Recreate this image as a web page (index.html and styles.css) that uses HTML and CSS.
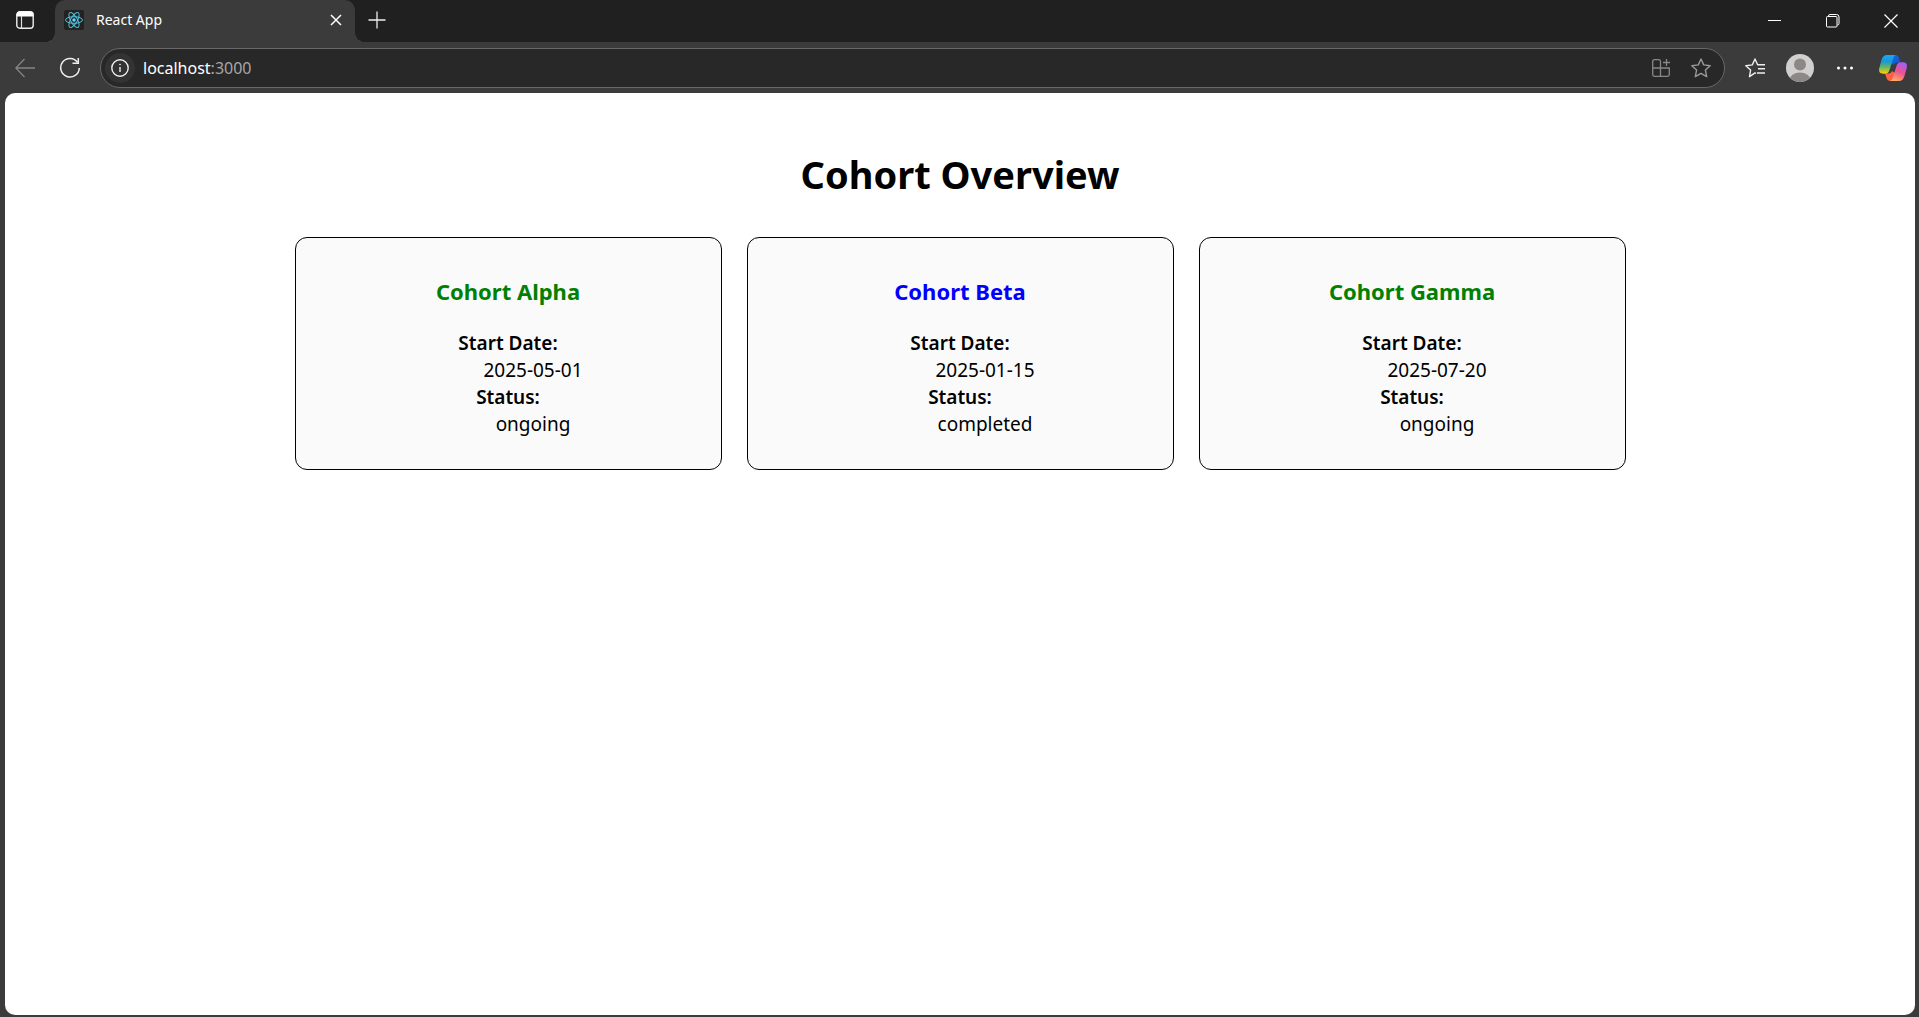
FILE: index.html
```html
<!DOCTYPE html>
<html lang="en">
<head>
<meta charset="utf-8">
<title>React App</title>
<link rel="stylesheet" href="styles.css">
</head>
<body>
<header class="chrome">
  <div class="tabstrip">
    <button class="tab-actions" aria-label="Tab actions">
      <svg width="18" height="18" viewBox="0 0 18 18" fill="none"><rect x=".8" y=".8" width="16.4" height="16.4" rx="3" stroke="#eee" stroke-width="1.4"/><path d="M1 5V3.500Q1 1 3.500 1H14.500Q17 1 17 3.500V5Z" fill="#fff" stroke="#fff"/><path d="M5.500 5V17" stroke="#ddd" stroke-width="1.200"/></svg>
    </button>
    <div class="tab">
      <svg class="favicon" width="20" height="20" viewBox="0 0 20 20" fill="none"><rect width="20" height="20" rx="2" fill="#222"/><g stroke="#53c1de" stroke-width="1"><ellipse cx="10" cy="10" rx="8.500" ry="3.300"/><ellipse cx="10" cy="10" rx="8.500" ry="3.300" transform="rotate(60 10 10)"/><ellipse cx="10" cy="10" rx="8.500" ry="3.300" transform="rotate(120 10 10)"/></g><circle cx="10" cy="10" r="1.700" fill="#61dafb"/></svg>
      <span class="tab-title">React App</span>
      <button class="tab-close" aria-label="Close tab"><svg width="12" height="12" viewBox="0 0 12 12"><path d="M1 1 11 11M11 1 1 11" stroke="#fff" stroke-width="1.500"/></svg></button>
    </div>
    <button class="new-tab" aria-label="New tab"><svg width="18" height="18" viewBox="0 0 18 18"><path d="M9 .5V17.500M.5 9H17.500" stroke="#eee" stroke-width="1.300"/></svg></button>
    <div class="window-buttons">
      <button aria-label="Minimize"><svg width="14" height="14" viewBox="0 0 14 14"><path d="M0 6.500H13" stroke="#fff"/></svg></button>
      <button aria-label="Restore"><svg width="14" height="14" viewBox="0 0 14 14" fill="none" stroke="#fff"><rect x=".5" y="2.500" width="10.500" height="10.500" rx="1"/><path d="M2.500 2.500V2Q2.500.5 4 .5H10.500Q13 .5 13 3V9.500Q13 11 11.500 11"/></svg></button>
      <button aria-label="Close"><svg width="14" height="14" viewBox="0 0 14 14"><path d="M.5.5 13.500 13.500M13.500.5.5 13.500" stroke="#fff" stroke-width="1.200"/></svg></button>
    </div>
  </div>
  <nav class="toolbar" aria-label="Browser toolbar">
    <button class="tool" aria-label="Back"><svg width="20" height="20" viewBox="0 0 20 20" fill="none"><path d="M20 10H1M9.500 1 .8 10 9.500 19" stroke="#858585" stroke-width="1.300"/></svg></button>
    <button class="tool" aria-label="Refresh"><svg width="22" height="22" viewBox="0 0 22 22" fill="none" stroke="#eee" stroke-width="1.500"><path d="M18.700 5.500A9.300 9.300 0 1 0 20.300 11"/><path d="M19.300 1V6.300H13.500"/></svg></button>
    <div class="omnibox">
      <button class="site-info" aria-label="Site information"><svg width="18" height="18" viewBox="0 0 18 18" fill="none" stroke="#eee" stroke-width="1.400"><circle cx="9" cy="9" r="8.200"/><path d="M9 8V13"/><circle cx="9" cy="5.600" r=".5" fill="#eee" stroke-width=".8"/></svg></button>
      <a class="address" href="#">localhost<span class="port">:3000</span></a>
      <button class="omni-button" aria-label="Install app"><svg width="18" height="18" viewBox="0 0 18 18" fill="none" stroke="#888" stroke-width="1.300"><path d="M8.500 9V2.500Q8.500.7 6.700.7H2.500Q.7.700.7 2.500V15.500Q.7 17.300 2.500 17.300H15.500Q17.300 17.300 17.300 15.500V9H.7M8.500 9V17.300M14.500 0V7M11 3.500H18"/></svg></button>
      <button class="omni-button" aria-label="Add to favorites"><svg width="20" height="20" viewBox="0 0 20 20" fill="none"><path d="M10 1 12.700 6.900 19.200 7.700 14.400 12.100 15.700 18.600 10 15.400 4.300 18.600 5.600 12.100.8 7.700 7.300 6.900Z" stroke="#999" stroke-width="1.400" stroke-linejoin="round"/></svg></button>
    </div>
    <button class="tool" aria-label="Favorites"><svg width="20" height="20" viewBox="0 0 20 20" fill="none" stroke="#eee" stroke-width="1.400" stroke-linejoin="round"><path d="M11 15.300 10 14.900 4.500 18.700 5.600 12.100.8 7.700 7.300 6.900 10 1 12.600 6.700H20M13 10.800H20M12 15H20"/></svg></button>
    <button class="tool" aria-label="Profile"><svg width="28" height="28" viewBox="0 0 28 28"><defs><clipPath id="avatar"><circle cx="14" cy="14" r="14"/></clipPath></defs><g clip-path="url(#avatar)"><rect width="28" height="28" fill="#d2d0ce"/><circle cx="14" cy="10.500" r="6" fill="#8c8885"/><ellipse cx="14" cy="26" rx="10.500" ry="7.500" fill="#8c8885"/></g></svg></button>
    <button class="tool" aria-label="Settings and more"><svg width="18" height="18" viewBox="0 0 18 18" fill="#fff"><circle cx="2.500" cy="9" r="1.500"/><circle cx="9" cy="9" r="1.500"/><circle cx="15.500" cy="9" r="1.500"/></svg></button>
    <button class="tool copilot" aria-label="Copilot"><svg width="28" height="26" viewBox="0 0 28 26">
      <defs>
        <linearGradient id="cool" x1="0" y1="0" x2="0" y2="1"><stop offset="0" stop-color="#18a8f5"/><stop offset=".35" stop-color="#1b97d8"/><stop offset=".65" stop-color="#66b75f"/><stop offset="1" stop-color="#ffd000"/></linearGradient>
        <linearGradient id="warm" x1=".7" y1="0" x2=".3" y2="1"><stop offset="0" stop-color="#a55cf5"/><stop offset=".5" stop-color="#ee5290"/><stop offset="1" stop-color="#ffb25c"/></linearGradient>
        <linearGradient id="blue" x1="0" y1="0" x2="1" y2="1"><stop offset="0" stop-color="#0c75dc"/><stop offset="1" stop-color="#1848d8"/></linearGradient>
      </defs>
      <path d="M14 0H17Q19 0 20 3L21.500 7.500H18Q15.500 7.500 14.500 10L12 8Z" fill="url(#blue)"/>
      <path d="M14 26H10.500Q8.500 26 7.500 23L6 18.500H9.500Q12 18.500 13 16L16 18Z" fill="#ff6044"/>
      <path d="M8 0H17Q15 0 14 4L10.500 15Q9.500 18.700 6.500 18.700H4Q-1 18.700.3 13L2.500 5Q4 0 8 0Z" fill="url(#cool)"/>
      <path d="M20 26H10.500Q13 26 14 22L17.500 11Q18.500 7.300 21.500 7.300H24Q29 7.300 27.700 13L25.500 21Q24 26 20 26Z" fill="url(#warm)"/>
    </svg></button>
  </nav>
</header>
<main class="page">
  <h1 class="page-title">Cohort Overview</h1>
  <div class="cards">
    <article class="card">
      <h3 class="card-title ongoing">Cohort Alpha</h3>
      <dl class="details"><dt>Start Date:</dt><dd>2025-05-01</dd><dt>Status:</dt><dd>ongoing</dd></dl>
    </article>
    <article class="card">
      <h3 class="card-title completed">Cohort Beta</h3>
      <dl class="details"><dt>Start Date:</dt><dd>2025-01-15</dd><dt>Status:</dt><dd>completed</dd></dl>
    </article>
    <article class="card">
      <h3 class="card-title ongoing">Cohort Gamma</h3>
      <dl class="details"><dt>Start Date:</dt><dd>2025-07-20</dd><dt>Status:</dt><dd>ongoing</dd></dl>
    </article>
  </div>
</main>
</body>
</html>
```
FILE: styles.css
```css
* {
  box-sizing: border-box;
}

body {
  margin: 0;
  min-height: 100vh;
  display: flex;
  flex-direction: column;
  background: #3b3b3b;
  color: #000;
  font-family: "Segoe UI", "Noto Sans", sans-serif;
}

button {
  display: flex;
  align-items: center;
  justify-content: center;
  flex: none;
  padding: 0;
  border: 0;
  background: none;
}

/* Tab strip */
.tabstrip {
  display: flex;
  height: 42px;
  background: #202020;
}

.tab-actions {
  width: 50px;
  height: 40px;
  margin-right: 5px;
}

.tab {
  position: relative;
  display: flex;
  align-items: center;
  width: 300px;
  padding: 0 7px 2px 9px;
  gap: 12px;
  border-radius: 10px 10px 0 0;
  background: #3b3b3b;
}

.tab::before,
.tab::after {
  content: "";
  position: absolute;
  bottom: 0;
  width: 10px;
  height: 10px;
}

.tab::before {
  right: 100%;
  background: radial-gradient(circle at 0 0, #202020 10px, #3b3b3b 10px);
}

.tab::after {
  left: 100%;
  background: radial-gradient(circle at 100% 0, #202020 10px, #3b3b3b 10px);
}

.tab-title {
  flex: 1;
  color: #fff;
  font-size: 14px;
  line-height: 20px;
}

.tab-close {
  width: 24px;
  height: 24px;
}

.new-tab {
  width: 44px;
  height: 40px;
}

.window-buttons {
  display: flex;
  margin-left: auto;
}

.window-buttons button {
  width: 58px;
  padding-left: 2px;
}

/* Toolbar */
.toolbar {
  display: flex;
  align-items: center;
  gap: 5px;
  padding: 6px 6px 5px 5px;
}

.tool {
  width: 40px;
  height: 40px;
}

.copilot {
  margin-left: 3px;
}

.omnibox {
  display: flex;
  align-items: center;
  flex: 1;
  height: 40px;
  margin: 0 5px;
  padding: 0 3px 0 4px;
  border: 1px solid #686868;
  border-radius: 20px;
  background: #282828;
}

.site-info {
  width: 30px;
  height: 30px;
  border-radius: 50%;
  background: #333;
}

.address {
  flex: 1;
  padding-left: 8px;
  color: #fff;
  font-size: 16px;
  line-height: 24px;
  text-decoration: none;
}

.port {
  color: #a6a6a6;
}

.omni-button {
  width: 40px;
  height: 36px;
}

/* Page */
.page {
  flex: 1;
  margin: 0 4px 2px 5px;
  padding: 54px 25px 25px;
  border-radius: 10px;
  background: #fff;
  text-align: center;
}

.page-title {
  margin: 0 0 36px;
  font-size: 38px;
  line-height: 54px;
}

.cards {
  display: flex;
  flex-wrap: wrap;
  justify-content: center;
  gap: 25px;
}

.card {
  width: 427px;
  padding: 37px 25px 31px;
  border: 1px solid #000;
  border-radius: 12px;
  background: #fafafa;
}

.card-title {
  margin: 0 0 23px;
  font-size: 22px;
  line-height: 32px;
}

.ongoing {
  color: green;
}

.completed {
  color: blue;
}

.details {
  margin: 0;
  font-size: 19px;
  line-height: 27px;
}

.details dt {
  font-weight: 600;
}

.details dd {
  margin-left: 50px;
}
```
